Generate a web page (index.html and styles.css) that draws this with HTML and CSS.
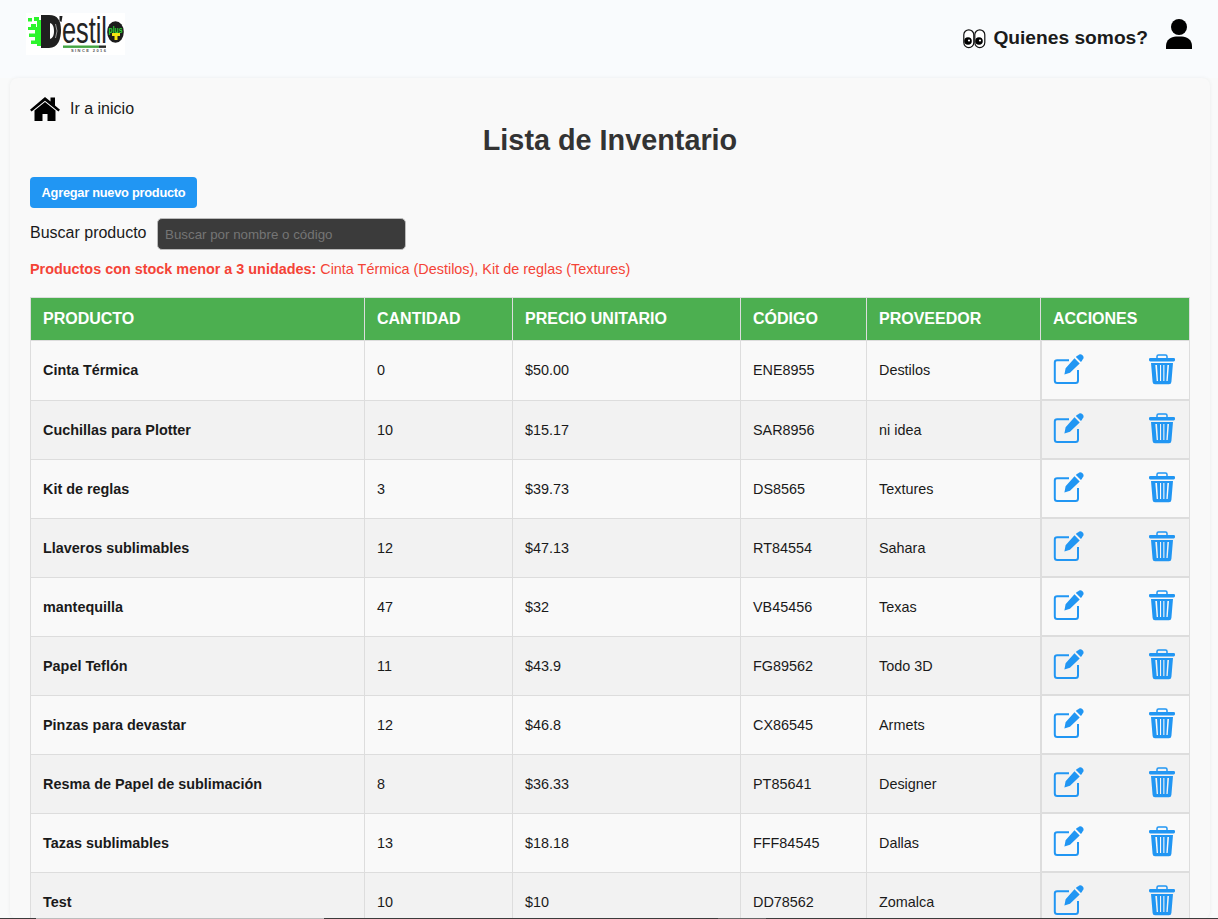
FILE: index.html
```html
<!DOCTYPE html>
<html lang="es">
<head>
<meta charset="utf-8">
<title>Lista de Inventario</title>
<link rel="stylesheet" href="styles.css">
</head>
<body>
<header class="topbar">
  <svg class="logo" width="99" height="42" viewBox="0 0 99 42">
    <rect width="99" height="42" fill="#fff"/>
    <path d="M2 5h4v3.500H2zM8 4h5v4H8zM5 11h5v3.500H5zM11 7h6v26h-6v-2H5v-3.500h4V24H3v-3.500h6V17H2v-3h9z" fill="#2cf52c"/>
    <path fill-rule="evenodd" d="M15 2h8c9 0 12 6 12 15s-3 18-12 18h-8zM24 10v16c3-1 4-4 4-8s-1-7-4-8z" fill="#202020"/>
    <path d="M29.500 11q3 7 0 14" stroke="#999" fill="none"/>
    <path d="M33.500 3h3l-1 6-2-1z" fill="#202020"/>
    <text class="logo-name" x="36" y="29.500" textLength="45" lengthAdjust="spacingAndGlyphs">estil</text>
    <rect x="37" y="32.500" width="36" height="2.400" fill="#43a542"/>
    <rect x="73" y="32.500" width="7" height="2.400" fill="#272b27"/>
    <text class="logo-since" x="45" y="39" textLength="35">SINCE 2016</text>
    <ellipse cx="89.500" cy="19" rx="8.300" ry="10.800" fill="#1c1c1c"/>
    <text class="logo-plus" x="82.500" y="19.500" textLength="14" lengthAdjust="spacingAndGlyphs">plus</text>
    <path d="M86 20h8v3h-2.500v4h-3v-4H86z" fill="#f2e413"/>
  </svg>
  <nav class="nav">
    <a class="about">
      <svg width="23" height="20" viewBox="0 0 23 20">
        <g fill="#fff" stroke="#111" stroke-width="1.200"><rect x=".8" y=".8" width="10" height="17.800" rx="5"/><rect x="11.800" y=".8" width="10" height="17.800" rx="5"/></g>
        <circle cx="5" cy="12" r="3.800"/><circle cx="16" cy="12" r="3.800"/>
        <g fill="#fff"><circle cx="6" cy="11.500" r="1.100"/><circle cx="17" cy="11.500" r="1.100"/></g>
      </svg>
      <span>Quienes somos?</span>
    </a>
    <svg class="user" width="26" height="31" viewBox="0 0 26 31"><circle cx="13" cy="8" r="8"/><path d="M0 30V27C0 21 5 17.500 10 17.500h6c5 0 10 3.500 10 9.500v3z"/></svg>
  </nav>
</header>
<main class="panel">
  <a class="home">
    <svg width="30" height="26" viewBox="0 0 30 26"><path d="M15 1l5.500 4.500V1.500H25v8l5 4.300-1.600 1.800L15 4.800 1.600 15.600 0 13.800z"/><path d="M15 6l10.500 8.500V25H17.500v-7h-5v7H4.500V14.500z"/></svg>
    <span>Ir a inicio</span>
  </a>
  <h1 class="title">Lista de Inventario</h1>
  <button class="add">Agregar nuevo producto</button>
  <div class="search">
    <label for="q">Buscar producto</label>
    <input id="q" type="text" placeholder="Buscar por nombre o código">
  </div>
  <p class="warning"><strong>Productos con stock menor a 3 unidades:</strong> Cinta Térmica (Destilos), Kit de reglas (Textures)</p>
  <table class="inventory">
    <colgroup><col class="c-name"><col class="c-qty"><col class="c-price"><col class="c-code"><col class="c-vendor"><col class="c-actions"></colgroup>
    <thead><tr><th>PRODUCTO</th><th>CANTIDAD</th><th>PRECIO UNITARIO</th><th>CÓDIGO</th><th>PROVEEDOR</th><th>ACCIONES</th></tr></thead>
    <tbody id="rows"></tbody>
  </table>
</main>
<div class="bottom-edge"><i class="edge-scroll"></i><i class="edge-mark"></i></div>
<template id="icons">
  <div class="actions">
    <svg width="31" height="31" viewBox="0 0 31 31" fill="#2196f3"><path d="M16 6.200H4.200Q1.800 6.200 1.800 8.500V26.500Q1.800 29 4.200 29H22.600Q25 29 25 26.500V16" fill="none" stroke="#2196f3" stroke-width="2"/><path d="M21.500 4.300l5.200 5.200L17 18.800 11.400 20.500l1.200-6.200zM22.900 3l1.400-1.400 5 5-1.400 1.400z"/><path d="M25 1.500q2.200-2.200 4.500-.3 2.200 2.200 0 4.500l-1 1L24 2.400z"/></svg>
    <svg width="26" height="31" viewBox="0 0 26 31" fill="#2196f3"><path d="M8 4V2.500Q8 1 9.500 1h7Q18 1 18 2.500V4" fill="none" stroke="#2196f3" stroke-width="1.500"/><rect y="4" width="26" height="3.400" rx="1.300"/><path fill-rule="evenodd" d="M2 9h22L22.400 28q-.2 2.300-2.400 2.300H6q-2.200 0-2.400-2.300zM6.300 11l1.400 16h1.300L8 11zM11 11v16h1.100V11zM14.300 11v16h1.100V11zM18.400 11l-1 16h1.300l1.300-16z"/></svg>
  </div>
</template>
<script src="app.js"></script>
</body>
</html>
```
FILE: styles.css
```css
* { box-sizing: border-box; }
html, body { margin: 0; height: 919px; overflow: hidden; }
body { background: #f9fafa; color: #1a1a1a; font-family: "Liberation Sans", Arial, sans-serif; font-size: 16px; }
.topbar { display: flex; justify-content: space-between; height: 78px; padding: 13px 26px 0 26px; background: #f9fbfd; }
.logo { display: block; }
.logo-name { font: 36px "Liberation Sans", sans-serif; fill: #242424; }
.logo-since { font: bold 4px "Liberation Sans", sans-serif; fill: #555; }
.logo-plus { font: bold 9px "Liberation Sans", sans-serif; fill: #2cdd35; }
.nav { display: flex; align-items: flex-start; gap: 18px; padding-top: 6px; }
.about { display: flex; align-items: center; gap: 7px; height: 37px; font-size: 19.2px; font-weight: bold; }
.about svg { margin-top: 3px; }
.user { display: block; }
.panel { width: 1200px; height: 841px; overflow: hidden; margin: 0 auto 0 10px; padding: 18px 20px; background: #f9f9f9; border-radius: 8px; box-shadow: 0 0 4px rgba(0,0,0,.06); }
.home { display: flex; align-items: center; gap: 10px; height: 26px; }
.home span { line-height: 24px; padding-bottom: 1px; }
.title { margin: 0; height: 55px; font-size: 28.8px; line-height: 36px; text-align: center; color: #333; }
.add { display: block; width: 167px; height: 31px; padding: 0; border: 0; border-radius: 4px; background: #2196f3; color: #fff; font: bold 12.8px "Liberation Sans", sans-serif; letter-spacing: -.25px; }
.search { display: flex; align-items: center; gap: 10.500px; height: 32px; margin-top: 10px; }
.search label { padding-bottom: 2px; }
.search input { width: 249px; height: 32px; padding: 0 7px; border: 1px solid #bbb; border-radius: 5px; background: #3b3b3b; font: 13.33px "Liberation Sans", sans-serif; }
.search input::placeholder { color: #757575; }
.warning { margin: 10px 0 19px; height: 18px; line-height: 18px; font-size: 14.4px; color: #f44336; white-space: nowrap; }
.inventory { width: 1160px; table-layout: fixed; border-collapse: collapse; }
.c-name { width: 334px; } .c-qty { width: 148px; } .c-price { width: 228px; }
.c-code { width: 126px; } .c-vendor { width: 174px; } .c-actions { width: 149px; }
th, td { border: 1px solid #ddd; text-align: left; padding: 0 0 0 12px; }
th { height: 43px; background: #4caf50; color: #fff; font-size: 16px; }
td { height: 59px; font-size: 14.4px; }
td:first-child { font-weight: bold; }
td.act { padding: 0; vertical-align: top; }
tbody tr:first-child td { height: 60px; padding-bottom: 2px; }
tbody tr:first-child td.act { padding-bottom: 0; }
tbody tr:nth-child(even) { background: #f2f2f2; }
.actions { display: flex; justify-content: space-between; height: 58px; padding: 12px 14px 0 11px; border: solid #ddd; border-width: 0 0 1px 1px; }
tbody tr:first-child .actions { height: 59px; padding-top: 13px; }
.bottom-edge { position: fixed; left: 0; right: 0; bottom: 0; height: 1px; display: flex; background: #3c3c3c; }
.edge-scroll { margin-left: 36px; width: 288px; background: #bdbdbd; }
.edge-mark { margin-left: 394px; width: 48px; background: #666; }
```
FILE: app.js
```js
const products = [
  ["Cinta Térmica", "0", "$50.00", "ENE8955", "Destilos"],
  ["Cuchillas para Plotter", "10", "$15.17", "SAR8956", "ni idea"],
  ["Kit de reglas", "3", "$39.73", "DS8565", "Textures"],
  ["Llaveros sublimables", "12", "$47.13", "RT84554", "Sahara"],
  ["mantequilla", "47", "$32", "VB45456", "Texas"],
  ["Papel Teflón", "11", "$43.9", "FG89562", "Todo 3D"],
  ["Pinzas para devastar", "12", "$46.8", "CX86545", "Armets"],
  ["Resma de Papel de sublimación", "8", "$36.33", "PT85641", "Designer"],
  ["Tazas sublimables", "13", "$18.18", "FFF84545", "Dallas"],
  ["Test", "10", "$10", "DD78562", "Zomalca"]
];
const body = document.getElementById("rows");
const icons = document.getElementById("icons");
for (const product of products) {
  const row = body.insertRow();
  for (const value of product) row.insertCell().textContent = value;
  const cell = row.insertCell();
  cell.className = "act";
  cell.append(icons.content.cloneNode(true));
}
```
